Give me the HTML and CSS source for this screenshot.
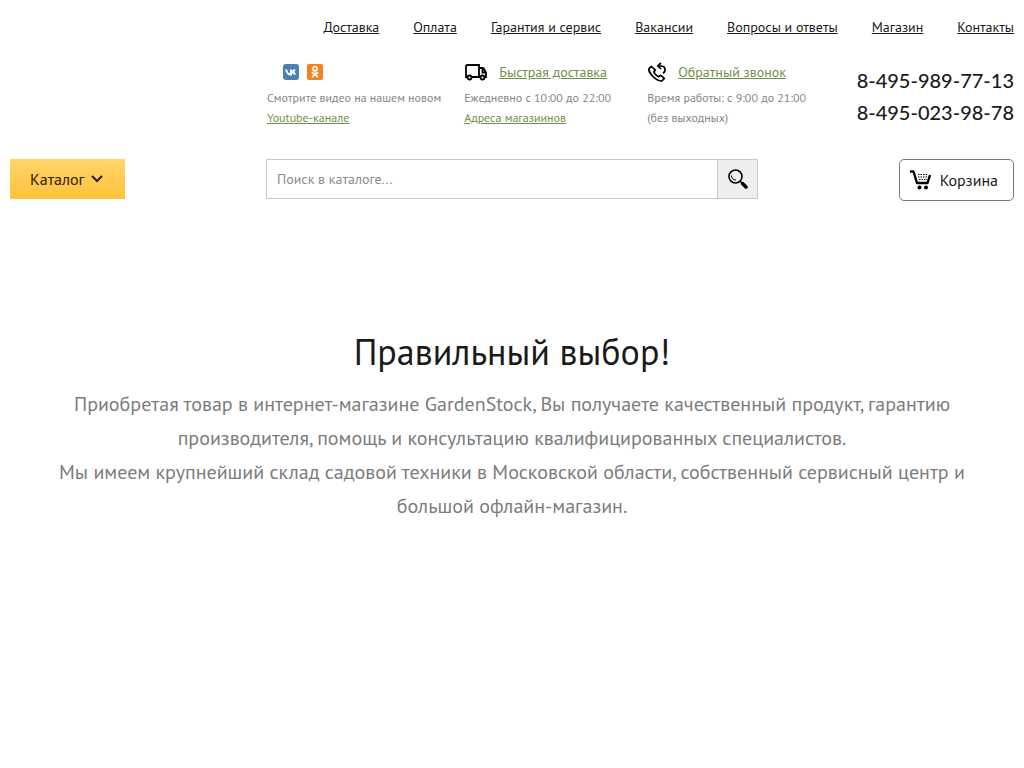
FILE: index.html
```html
<!DOCTYPE html>
<html lang="ru">
<head>
<meta charset="utf-8">
<meta name="viewport" content="width=device-width, initial-scale=1">
<title>GardenStock</title>
<link rel="stylesheet" href="styles.css">
</head>
<body>
<header class="header">
  <nav class="nav">
    <a href="#">Доставка</a>
    <a href="#">Оплата</a>
    <a href="#">Гарантия и сервис</a>
    <a href="#">Вакансии</a>
    <a href="#">Вопросы и ответы</a>
    <a href="#">Магазин</a>
    <a href="#">Контакты</a>
  </nav>
  <div class="info">
    <div class="info-col">
      <div class="info-head social">
        <a href="#" aria-label="ВКонтакте"><svg width="16" height="16" viewBox="0 0 16 16"><rect width="16" height="16" rx="3" fill="#4d7fb2"/><path d="M3 5.500c.8 3.300 2.300 5 5 5V5.500M8.300 8c1.900-.1 2.900-1.100 3.500-2.500M8.300 8c2.100.1 3.100 1 3.900 2.500" fill="none" stroke="#fff" stroke-width="2"/></svg></a>
        <a href="#" aria-label="Одноклассники"><svg width="16" height="16" viewBox="0 0 16 16"><rect width="16" height="16" rx="2" fill="#f58220"/><g fill="none" stroke="#fff" stroke-width="1.700" stroke-linecap="round"><circle cx="8" cy="4.800" r="2.100"/><path d="M5.300 8.700c1.600 1.100 3.800 1.100 5.400 0M8 9.800l-2.400 3M8 9.800l2.400 3"/></g></svg></a>
      </div>
      <p>Смотрите видео на нашем новом<br><a href="#">Youtube-канале</a></p>
    </div>
    <div class="info-col">
      <div class="info-head">
        <svg width="24" height="18" viewBox="0 0 24 18" fill="none" stroke="#000" stroke-width="1.800"><path d="M3 14H2V3.500Q2 2 3.500 2H15V14H8M15 5h3.500q1 0 1.500 1l2 3.500V14H21M15 14h1M18.500 5v4.500H22"/><circle cx="5.500" cy="14.500" r="2"/><circle cx="18.500" cy="14.500" r="2"/></svg>
        <a href="#">Быстрая доставка</a>
      </div>
      <p>Ежедневно с 10:00 до 22:00<br><a href="#">Адреса магазиинов</a></p>
    </div>
    <div class="info-col">
      <div class="info-head">
        <svg width="20" height="20" viewBox="0 0 20 20" fill="none" stroke="#000" stroke-width="1.700" stroke-linejoin="round"><path d="M4.500 4.500 2.500 6C1.300 7.200 2.300 10.500 5.500 14s7.400 5.600 9.500 4.800l2.300-2.400-3.600-3.100-2 1.500c-1.900-.5-4.500-3.400-4.800-5.100l1.500-1.600z"/><path d="M14 1l-3.300 2.900L14 7M11 4h3c5 0 5 5.500 2 7.300"/></svg>
        <a href="#">Обратный звонок</a>
      </div>
      <p>Время работы: с 9:00 до 21:00<br>(без выходных)</p>
    </div>
    <div class="phones">
      <span>8-495-989-77-13</span>
      <span>8-495-023-98-78</span>
    </div>
  </div>
  <div class="toolbar">
    <button class="catalog" type="button">Каталог
      <svg width="12" height="8" viewBox="0 0 12 8"><path d="M1 1l5 5 5-5" fill="none" stroke="#302000" stroke-width="2"/></svg>
    </button>
    <form class="search" role="search">
      <input type="text" placeholder="Поиск в каталоге..." aria-label="Поиск в каталоге">
      <button type="submit" aria-label="Найти"><svg width="20" height="20" viewBox="0 0 20 20" fill="none" stroke="#000"><circle cx="7.500" cy="7.500" r="6.500" stroke-width="1.600"/><path d="M3.500 6.500c0 3 2 4.500 4.500 4.500" stroke-width="1"/><path d="M12 12l2 2" stroke-width="1.500"/><path d="M14.500 14.500l3.500 3.500" stroke-width="3.500" stroke-linecap="round"/></svg></button>
    </form>
    <button class="cart" type="button">
      <svg width="22" height="20" viewBox="0 0 22 20"><path d="M0 1.500h3.500L7 13h10.500l2.500-8" fill="none" stroke="#000" stroke-width="2.400" stroke-linejoin="round"/><path d="M8 4.500h10M8 7h10M9 9.500h8" stroke="#000" stroke-width="1" stroke-dasharray="1.500 1" fill="none"/><circle cx="9.500" cy="17.500" r="2"/><circle cx="16" cy="17.500" r="2"/></svg>
      Корзина
    </button>
  </div>
</header>
<main class="about">
  <h1>Правильный выбор!</h1>
  <p>Приобретая товар в интернет-магазине GardenStock, Вы получаете качественный продукт, гарантию производителя, помощь и консультацию квалифицированных специалистов.<br>Мы имеем крупнейший склад садовой техники в Московской области, собственный сервисный центр и большой офлайн-магазин.</p>
</main>
</body>
</html>
```
FILE: styles.css
```css
* { box-sizing: border-box; }
body {
  margin: 0;
  background: #fff;
  color: #1a1a1a;
  font-family: "PT Sans", "Noto Sans", sans-serif;
}
p, h1 { margin: 0; }
svg { display: block; flex: none; }
button, input { font: inherit; }
.header { padding: 16px 10px 0; }
.nav {
  display: flex;
  flex-wrap: wrap;
  justify-content: flex-end;
  gap: 8px 34px;
  font-size: 14px;
  line-height: 22px;
}
.nav a { color: #1a1a1a; }
.info {
  display: flex;
  flex-wrap: wrap;
  gap: 0 23px;
  padding: 23px 0 0 257px;
}
.info-col { min-width: 160px; }
.info-head {
  display: flex;
  align-items: center;
  gap: 11px;
  height: 22px;
  margin-bottom: 5px;
  font-size: 14px;
}
.social { gap: 8px; padding-left: 16px; }
.info p {
  color: #858585;
  font-size: 12px;
  line-height: 20px;
}
.info a { color: #6f8f4a; }
.phones {
  display: flex;
  flex-direction: column;
  margin-left: auto;
  padding-top: 3px;
  font-family: "Lato Medium", Carlito, Lato, sans-serif;
  font-size: 20px;
  font-weight: 500;
  line-height: 32px;
}
.toolbar {
  display: grid;
  grid-template-columns: 256px minmax(0, 1fr) 256px;
  align-items: start;
  padding-top: 31px;
}
.catalog {
  justify-self: start;
  display: flex;
  align-items: center;
  gap: 6px;
  height: 40px;
  padding: 0 22px 0 20px;
  border: 0;
  background: linear-gradient(#ffd56b, #ffc13b);
  color: #302000;
  font-size: 16px;
}
.search { display: flex; height: 40px; border: 1px solid #c8c8c8; }
.search input {
  flex: 1;
  min-width: 0;
  padding: 0 10px;
  border: 0;
  font-size: 14px;
}
.search input::placeholder { color: #8c8c8c; }
.search button {
  display: grid;
  place-items: center;
  width: 40px;
  padding: 0;
  border: 0;
  border-left: 1px solid #c8c8c8;
  background: #eee;
}
.cart {
  justify-self: end;
  display: flex;
  align-items: center;
  gap: 8px;
  height: 42px;
  padding: 0 15px 0 10px;
  border: 1px solid #777;
  border-radius: 5px;
  background: #fff;
  color: #1a1a1a;
  font-size: 16px;
}
.about { padding: 124px 40px 0; text-align: center; }
.about h1 {
  margin-bottom: 8px;
  font-size: 36px;
  font-weight: 400;
  line-height: 54px;
}
.about p {
  color: #7c7c7c;
  font-size: 20px;
  line-height: 34px;
}
```
